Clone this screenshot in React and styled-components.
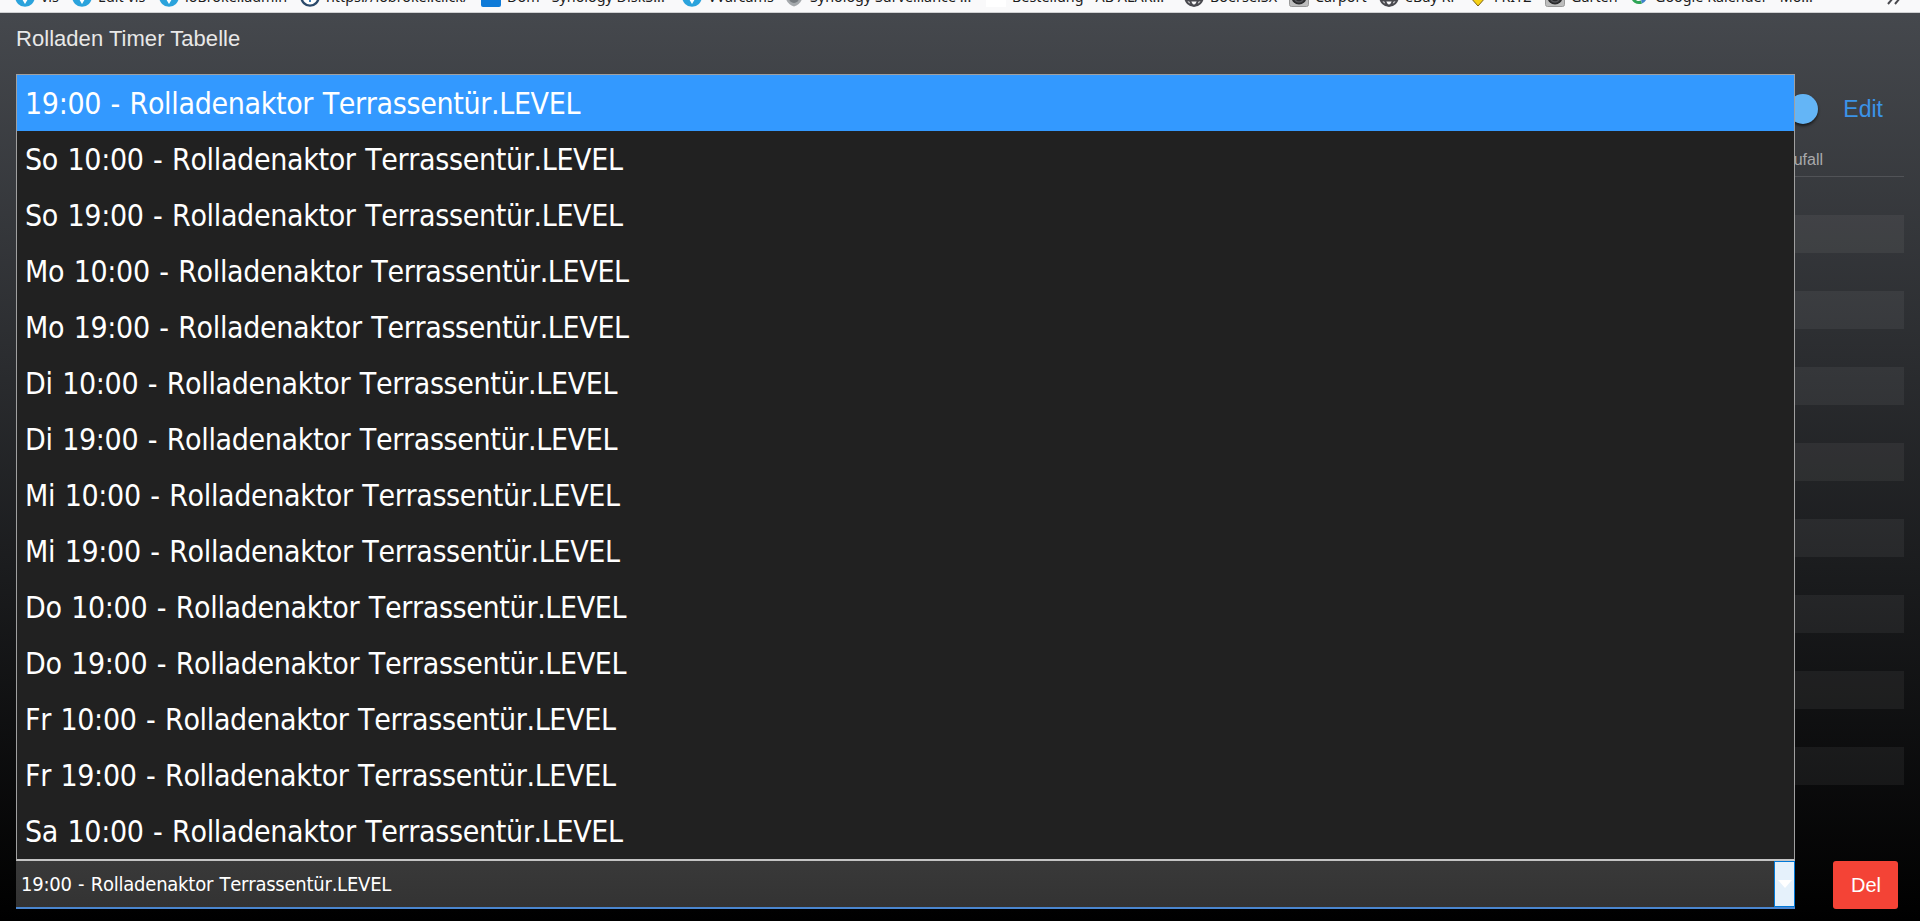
import React from 'react';
import styled, { createGlobalStyle } from 'styled-components';

const GlobalStyle = createGlobalStyle`
  * {
    box-sizing: border-box;
  }
  body {
    margin: 0;
    overflow: hidden;
    background: #000;
    font-family: 'Liberation Sans', Arial, sans-serif;
  }
`;

const days = ['So', 'Mo', 'Di', 'Mi', 'Do', 'Fr'];
const actor = 'Rolladenaktor Terrassentür.LEVEL';
const timers = [
  `19:00 - ${actor}`,
  ...days.flatMap(day => [`${day} 10:00 - ${actor}`, `${day} 19:00 - ${actor}`]),
  `Sa 10:00 - ${actor}`,
];

const bookmarks = [
  { icon: 'vis', label: 'vis', width: 57 },
  { icon: 'vis', label: 'Edit vis', width: 87 },
  { icon: 'vis', label: 'ioBroker.admin', width: 141 },
  { icon: 'broker', label: 'https://iobroker.click/', width: 181 },
  { icon: 'nas', label: 'Dom - Synology DiskS...', width: 201 },
  { icon: 'vis', label: 'VVarcams', width: 102 },
  { icon: 'eye', label: 'Synology Surveillance ...', width: 202 },
  { icon: 'blank', label: 'Bestellung - AB ALAR...', width: 198 },
  { icon: 'globe', label: 'Boerse.SX', width: 105 },
  { icon: 'camera', label: 'Carport', width: 90 },
  { icon: 'globe', label: 'eBay Kl', width: 89 },
  { icon: 'fritz', label: 'FRITZ', width: 77 },
  { icon: 'camera', label: 'Garten', width: 84 },
  { icon: 'google', label: 'Google Kalender - Mo...', width: 240 },
];

const Screen = styled.div`
  display: flex;
  flex-direction: column;
  width: 1920px;
  height: 921px;
  overflow: hidden;
`;

const BookmarkBar = styled.nav`
  display: flex;
  align-items: flex-end;
  height: 13px;
  padding: 0 19px 5px 15px;
  overflow: hidden;
  background: #f9f9fa;
  border-bottom: 1px solid #cfd0d2;
`;

const Bookmark = styled.div`
  display: flex;
  flex: none;
  align-items: center;
  gap: 6px;
  width: ${props => props.$width}px;
  height: 20px;
  color: #1c1c1c;
  font-family: 'Noto Sans', sans-serif;
  font-size: 14.35px;
  line-height: 20px;
  white-space: nowrap;
`;

const Favicon = styled.svg`
  flex: none;
  width: 20px;
  height: 20px;
`;

const MoreIcon = styled.svg`
  flex: none;
  width: 14px;
  height: 14px;
  margin: 0 0 2px auto;
`;

const Page = styled.main`
  flex: 1;
  display: flex;
  flex-direction: column;
  padding: 0 16px 12px;
  background: linear-gradient(to bottom, #45484d 0%, #000 100%);
`;

const Title = styled.h1`
  height: 61px;
  margin: 0;
  padding-top: 13px;
  color: #e8e8e8;
  font-size: 22px;
  font-weight: 400;
  line-height: 26px;
  letter-spacing: 0.04px;
`;

const Body = styled.div`
  flex: 1;
  position: relative;
  display: flex;
  flex-direction: column;
`;

const Toolbar = styled.div`
  display: flex;
  justify-content: flex-end;
  align-items: center;
  gap: 25px;
  height: 70px;
  padding-right: 21px;
`;

const Knob = styled.span`
  width: 30px;
  height: 30px;
  border-radius: 50%;
  background: #64b5f6;
  box-shadow: 0 2px 3px rgba(0, 0, 0, 0.6);
`;

const EditLink = styled.a`
  color: #3b93e8;
  font-size: 23px;
`;

const TableHead = styled.div`
  display: flex;
  justify-content: flex-end;
  align-items: center;
  height: 33px;
  padding-right: 81px;
  border-bottom: 1px solid #515357;
  color: #a9a9ab;
  font-size: 16px;
`;

const TableRow = styled.div`
  height: 38px;

  &:nth-child(even) {
    background: rgba(255, 255, 255, 0.055);
  }
`;

const Footer = styled.div`
  display: flex;
  justify-content: space-between;
  height: 48px;
  margin-top: auto;
  padding-right: 6px;
`;

const Select = styled.div`
  display: flex;
  width: 1779px;
  background: linear-gradient(#393939, #333);
  border-bottom: 2px solid #4a86cf;
`;

const SelectValue = styled.span`
  flex: 1;
  padding-left: 5px;
  color: #fff;
  font-family: 'DejaVu Sans Condensed', 'DejaVu Sans', sans-serif;
  font-stretch: condensed;
  font-kerning: none;
  font-size: 20px;
  line-height: 47px;
  letter-spacing: -0.23px;
  word-spacing: 0.9px;
`;

const SelectArrow = styled.span`
  display: flex;
  align-items: center;
  justify-content: center;
  width: 21px;
  background: #e5f1fb;
  border: 1px solid #0078d7;
`;

const DeleteButton = styled.button`
  width: 65px;
  padding: 0 0 0 1px;
  border: 0;
  border-radius: 3px;
  background: #f44336;
  color: #fff;
  font-family: inherit;
  font-size: 20px;
`;

// Opened option list, lies over the table
const Dropdown = styled.ul`
  position: absolute;
  top: 0;
  left: 0;
  width: 1779px;
  margin: 0;
  padding: 0;
  list-style: none;
  background: #212121;
  border: 1px solid #a0a0a0;
  border-bottom: 2px solid #c4c4c4;
`;

const Option = styled.li`
  height: 56px;
  padding-left: 8px;
  background: ${props => (props.$selected ? '#3399ff' : 'transparent')};
  color: #fff;
  font-family: 'DejaVu Sans Condensed', 'DejaVu Sans', sans-serif;
  font-stretch: condensed;
  font-kerning: none;
  font-size: 30px;
  line-height: 58px;
  letter-spacing: -0.34px;
  word-spacing: 1.3px;
  white-space: nowrap;
`;

const icons = {
  vis: (
    <>
      <circle cx="10" cy="10" r="9.8" fill="#2ba3dc" />
      <path d="M7 5h6v7l-3 5-3-5z" fill="#fff" />
    </>
  ),
  broker: (
    <>
      <circle cx="10" cy="10" r="8.6" fill="#fff" stroke="#2b4a6b" strokeWidth="2.4" />
      <path d="M10 6v9" stroke="#3c7fb5" strokeWidth="2" />
    </>
  ),
  nas: <rect width="20" height="20" rx="2" fill="#0f7bd8" />,
  eye: (
    <>
      <path d="M2 2h16v9c0 4-4 7-8 8.500c-4-1.500-8-4.500-8-8.500z" fill="#a5a9ac" />
      <circle cx="10" cy="11" r="5" fill="#777c80" />
    </>
  ),
  blank: <rect width="20" height="20" fill="#fff" />,
  globe: (
    <g fill="none" stroke="#4a4a4f" strokeWidth="2">
      <circle cx="10" cy="10" r="8.8" />
      <ellipse cx="10" cy="10" rx="4.2" ry="8.8" />
      <path d="M2 13.5h16M2 7h16" />
    </g>
  ),
  camera: (
    <>
      <rect x=".5" y=".5" width="19" height="19" rx="2" fill="#bdbdbd" stroke="#999" />
      <circle cx="10" cy="10" r="7.6" fill="#2b2b2d" />
      <path d="M6 13a5 5 0 0 0 8 0" fill="none" stroke="#55565a" strokeWidth="1.5" />
    </>
  ),
  fritz: <path d="M2 10l8-9 8 9-8 9z" fill="#f7d216" stroke="#7d6415" />,
  google: (
    <g fill="none" strokeWidth="3">
      <path d="M3.5 9a6.5 6.5 0 0 0 9 6" stroke="#2fa556" />
      <path d="M12.5 15a6.5 6.5 0 0 0 4-6" stroke="#3f83c9" />
    </g>
  ),
};

const App = () => (
  <Screen>
    <GlobalStyle />
    <BookmarkBar>
      {bookmarks.map(({ icon, label, width }) => (
        <Bookmark key={label} $width={width}>
          <Favicon viewBox="0 0 20 20">{icons[icon]}</Favicon>
          {label}
        </Bookmark>
      ))}
      <MoreIcon viewBox="0 0 14 14">
        <path
          d="M1 1l5 6-5 6M8 1l5 6-5 6"
          fill="none"
          stroke="#4a4a4f"
          strokeWidth="2"
        />
      </MoreIcon>
    </BookmarkBar>
    <Page>
      <Title>Rolladen Timer Tabelle</Title>
      <Body>
        <Toolbar>
          <Knob />
          <EditLink>Edit</EditLink>
        </Toolbar>
        <TableHead>Zufall</TableHead>
        <div>
          {Array.from({ length: 16 }, (_, i) => (
            <TableRow key={i} />
          ))}
        </div>
        <Footer>
          <Select>
            <SelectValue>{timers[0]}</SelectValue>
            <SelectArrow>
              <svg width="14" height="8" viewBox="0 0 14 8">
                <path d="M0 0h14L7 8z" fill="#fff" />
              </svg>
            </SelectArrow>
          </Select>
          <DeleteButton>Del</DeleteButton>
        </Footer>
        <Dropdown>
          {timers.map((timer, i) => (
            <Option key={timer} $selected={i === 0}>
              {timer}
            </Option>
          ))}
        </Dropdown>
      </Body>
    </Page>
  </Screen>
);

export default App;
